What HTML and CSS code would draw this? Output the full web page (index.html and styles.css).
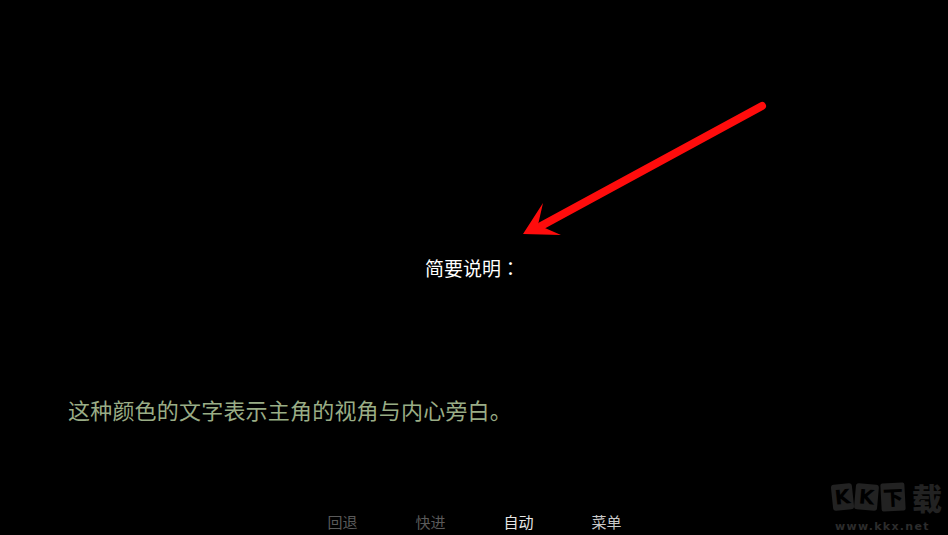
FILE: index.html
```html
<!DOCTYPE html>
<html lang="zh-CN">
<head>
<meta charset="utf-8">
<title>简要说明</title>
<link rel="stylesheet" href="styles.css">
</head>
<body>
<div class="screen">
  <div class="title">简要说明<span class="colon" lang="zh-TW">：</span></div>
  <div class="narration">这种颜色的文字表示主角的视角与内心旁白。</div>
  <nav class="menu">
    <span class="item dim">回退</span>
    <span class="item dim">快进</span>
    <span class="item bright">自动</span>
    <span class="item light">菜单</span>
  </nav>

  <svg class="arrow" viewBox="0 0 948 535" width="948" height="535" aria-hidden="true">
    <line x1="762" y1="106" x2="541" y2="226" stroke="#ff0c0c" stroke-width="8" stroke-linecap="round"/>
    <polygon points="523,234 543,203 538,225 561,235" fill="#ff0c0c"/>
  </svg>

  <div class="watermark">
    <div class="logo">
      <span class="tile t1">K</span>
      <span class="tile t2">K</span>
      <span class="tile t3">下</span>
      <span class="tile t4">载</span>
    </div>
    <div class="url">www.kkx.net</div>
  </div>
</div>
</body>
</html>
```

FILE: styles.css
```css
html, body {
  margin: 0;
  padding: 0;
  background: #000;
}

body {
  font-family: "Noto Sans CJK SC", "Noto Sans", sans-serif;
}

.screen {
  position: relative;
  width: 948px;
  height: 535px;
  overflow: hidden;
  background: #000;
  display: flex;
  flex-direction: column;
}

.title {
  margin-top: 254px;
  text-align: center;
  color: #ffffff;
  font-size: 19px;
  line-height: 28px;
  padding-right: 3px;
}

.colon {
  font-family: "Noto Sans CJK TC", "Noto Sans CJK SC", sans-serif;
}

.narration {
  margin-top: 112px;
  padding-left: 68px;
  color: #9aad86;
  font-size: 22px;
  line-height: 30px;
  letter-spacing: 0.2px;
}

.menu {
  margin-top: auto;
  display: flex;
  justify-content: center;
  gap: 58px;
  font-size: 15px;
  line-height: 20px;
  padding-bottom: 3px;
  padding-left: 1px;
}

.item.dim { color: #5a5a5a; }
.item.bright { color: #e6e6e6; }
.item.light { color: #c8c8c8; }

.arrow {
  position: absolute;
  left: 0;
  top: 0;
  pointer-events: none;
}

.watermark {
  position: absolute;
  left: 832px;
  top: 482px;
  width: 116px;
}

.logo {
  display: flex;
  align-items: center;
  height: 30px;
}

.tile {
  display: flex;
  align-items: center;
  justify-content: center;
  background: #222;
  color: #000;
  font-family: "DejaVu Sans", sans-serif;
  font-weight: bold;
  font-size: 20px;
  line-height: 1;
  height: 26px;
}

.t1 { width: 21px; transform: rotate(-6deg); border-radius: 3px; }
.t2 { width: 23px; margin-left: 2px; transform: rotate(5deg); border-radius: 3px; }
.t3 { width: 24px; margin-left: 3px; height: 28px; font-family: "Noto Sans CJK SC", sans-serif; font-weight: 900; font-size: 20px; transform: rotate(-3deg); border-radius: 2px; }
.t4 { width: 36px; margin-left: 4px; background: transparent; color: #222; font-family: "Noto Sans CJK SC", sans-serif; font-weight: 900; font-size: 30px; }

.url {
  margin-top: 8px;
  padding-left: 3px;
  color: #2c2c2c;
  font-family: "DejaVu Sans", sans-serif;
  font-weight: bold;
  font-size: 11px;
  line-height: 14px;
  letter-spacing: 1.3px;
}
```
